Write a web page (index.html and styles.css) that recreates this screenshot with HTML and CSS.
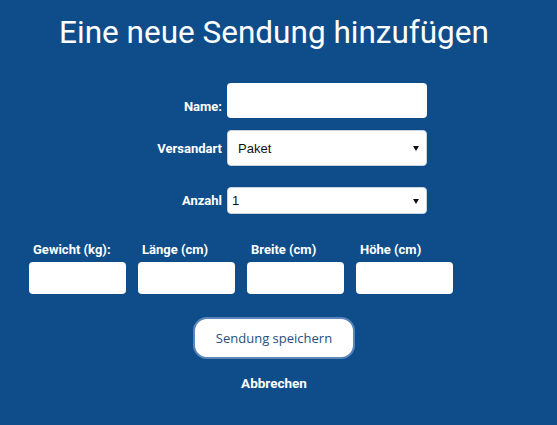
FILE: index.html
```html
<!DOCTYPE html>
<html lang="de">
<head>
  <meta charset="UTF-8" />
  <meta name="viewport" content="width=device-width, initial-scale=1.0"/>
  <title>Sendung hinzufügen</title>
  <link rel="stylesheet" href="styles.css">
</head>
<body>
  <div class="page">
    <h1>Eine neue Sendung hinzufügen</h1>

    <form class="shipment-form">
      <div class="fields">
        <label for="name" class="field-label">Name:</label>
        <input type="text" id="name" class="text-input name-input" />

        <label for="type" class="field-label">Versandart</label>
        <div class="select-wrap tall">
          <select id="type">
            <option>Paket</option>
            <option>Brief</option>
            <option>Päckchen</option>
          </select>
        </div>

        <label for="count" class="field-label count-label">Anzahl</label>
        <div class="select-wrap short count-select">
          <select id="count">
            <option>1</option>
            <option>2</option>
            <option>3</option>
          </select>
        </div>
      </div>

      <div class="dimensions">
        <div class="dim">
          <label for="weight">Gewicht (kg):</label>
          <input type="text" id="weight" class="text-input" />
        </div>
        <div class="dim">
          <label for="length">Länge (cm)</label>
          <input type="text" id="length" class="text-input" />
        </div>
        <div class="dim">
          <label for="width">Breite (cm)</label>
          <input type="text" id="width" class="text-input" />
        </div>
        <div class="dim">
          <label for="height">Höhe (cm)</label>
          <input type="text" id="height" class="text-input" />
        </div>
      </div>

      <div class="actions">
        <button type="submit" class="save-btn">Sendung speichern</button>
        <a href="#" class="cancel">Abbrechen</a>
      </div>
    </form>
  </div>
</body>
</html>
```

FILE: styles.css
```css
body {
  margin: 0;
  padding: 0;
  background: #0f4d8a;
  font-family: Roboto, "Liberation Sans", Arial, sans-serif;
  color: white;
}

.page {
  width: 548px;
  padding-top: 13px;
}

h1 {
  margin: 0;
  text-align: center;
  font-weight: 400;
  font-size: 31.5px;
  line-height: 40px;
}

.fields {
  display: grid;
  grid-template-columns: 222px 200px;
  column-gap: 5px;
  align-items: center;
  margin-top: 30px;
}

.field-label {
  text-align: right;
  font-weight: 700;
  font-size: 13px;
}

.text-input {
  box-sizing: border-box;
  border: none;
  border-radius: 4px;
  background: white;
  padding: 0 6px;
  font-family: "Liberation Sans", Arial, sans-serif;
  font-size: 13px;
}

.name-input {
  width: 200px;
  height: 35px;
  margin-bottom: 12px;
}

.select-wrap {
  position: relative;
  width: 200px;
}

.select-wrap::after {
  content: "";
  position: absolute;
  right: 8px;
  top: 50%;
  margin-top: -2px;
  border-left: 3px solid transparent;
  border-right: 3px solid transparent;
  border-top: 5px solid #111;
}

.select-wrap select {
  appearance: none;
  -webkit-appearance: none;
  box-sizing: border-box;
  width: 200px;
  border: 1px solid #c9d3de;
  border-radius: 4px;
  background: white;
  color: #111;
  font-family: "Liberation Sans", Arial, sans-serif;
  font-size: 13px;
}

.tall select {
  height: 36px;
  padding: 0 10px;
}

.short select {
  height: 27px;
  padding: 0 4px;
}

.count-label,
.count-select {
  margin-top: 21px;
}

.dimensions {
  display: flex;
  gap: 12px;
  padding-left: 29px;
  margin-top: 28px;
}

.dim {
  display: flex;
  flex-direction: column;
}

.dim label {
  font-weight: 700;
  font-size: 13px;
  padding-left: 4px;
  margin-bottom: 5px;
}

.dim .text-input {
  width: 97px;
  height: 32px;
}

.actions {
  display: flex;
  flex-direction: column;
  align-items: center;
  margin-top: 23px;
}

.save-btn {
  width: 162px;
  height: 42px;
  border: 2px solid #5b86b9;
  border-radius: 14px;
  background: white;
  color: #264f80;
  font-family: "Open Sans", sans-serif;
  font-size: 13px;
  cursor: pointer;
}

.cancel {
  margin-top: 16px;
  color: white;
  text-decoration: none;
  font-weight: 700;
  font-size: 13.5px;
}
```
